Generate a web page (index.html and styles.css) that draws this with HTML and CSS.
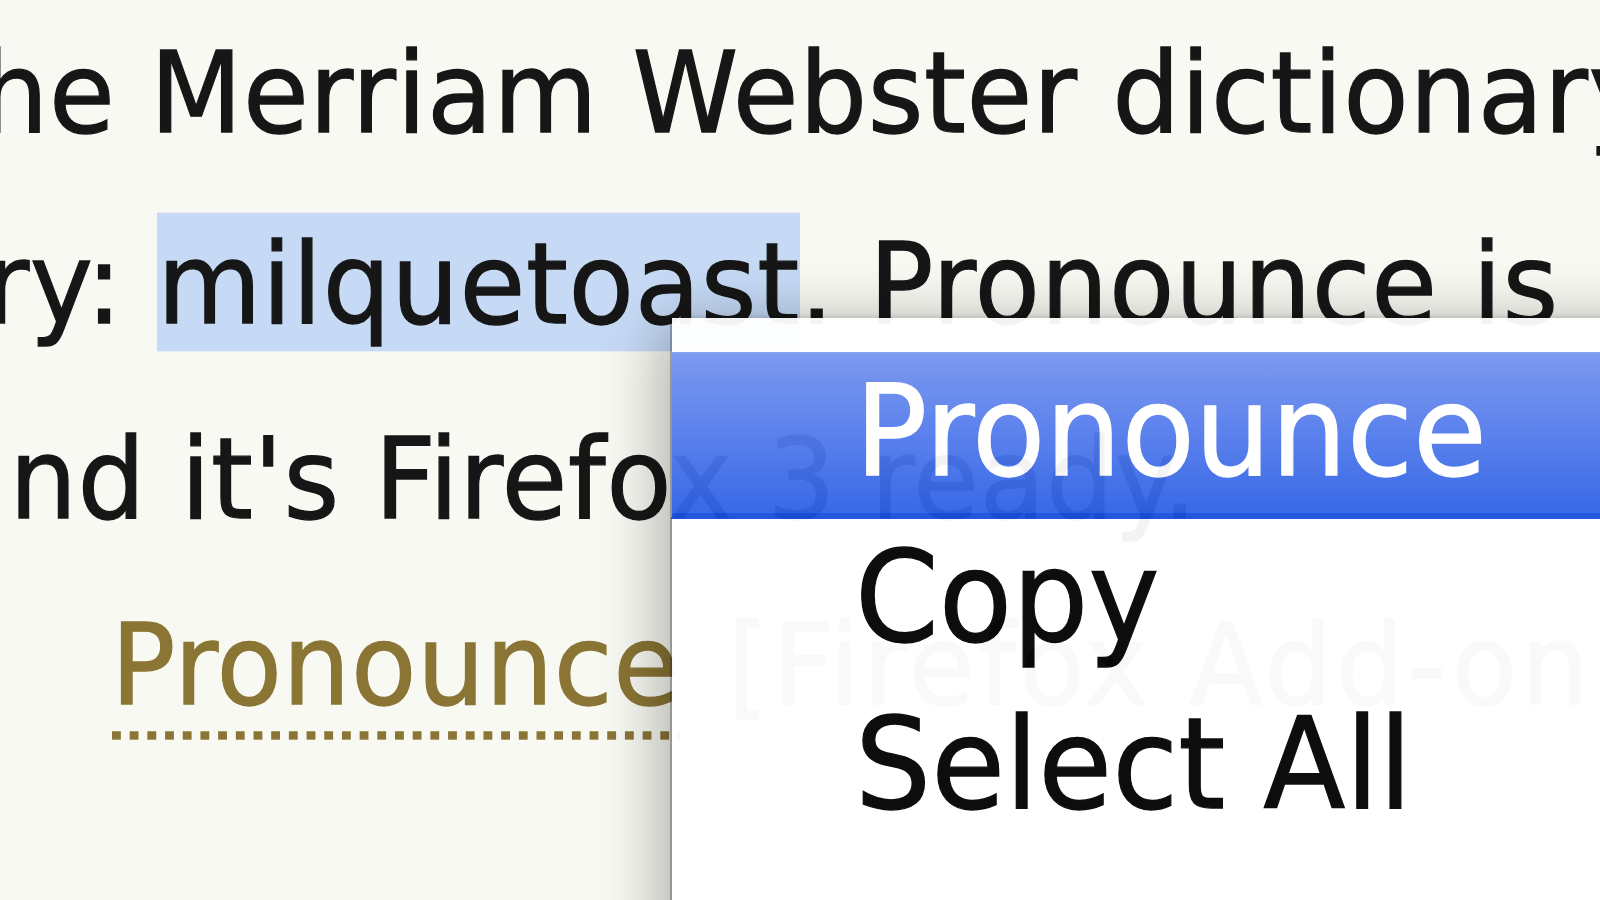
FILE: index.html
```html
<!DOCTYPE html>
<html lang="en">
<head>
<meta charset="utf-8">
<title>Pronounce</title>
<link rel="stylesheet" href="styles.css">
</head>
<body>
<div class="page">
  <div class="line l1">the Merriam Webster dictionary</div>
  <div class="line l2">ary: <span class="sel">milquetoast</span>. Pronounce is</div>
  <div class="line l3">and it's Firefox 3 ready.</div>
  <div class="line l4"><a class="link">Pronounce</a> <span class="meta">[Firefox Add-on]</span></div>
  <div class="menu">
    <div class="item active"><span class="label">Pronounce</span></div>
    <div class="item"><span class="label">Copy</span></div>
    <div class="item"><span class="label">Select All</span></div>
  </div>
</div>
</body>
</html>
```

FILE: styles.css
```css
html, body {
  margin: 0;
  padding: 0;
  width: 1600px;
  height: 900px;
  overflow: hidden;
  background: #f9f9f3;
}

.page {
  position: relative;
  width: 1600px;
  height: 900px;
  overflow: hidden;
  font-family: "DejaVu Sans", "Liberation Sans", sans-serif;
  font-size: 107px;
  line-height: 191px;
  letter-spacing: 0.6px;
  color: #161616;
  -webkit-text-stroke: 1.2px currentColor;
  filter: blur(0.7px);
}

.line {
  white-space: nowrap;
  transform: scaleY(1.05);
  transform-origin: 0 132.5px;
}

.l1 { margin-left: -62px; }
.l2 { margin-left: -81px; }
.l3 { margin-left: -57px; margin-top: 4px; }
.l4 { margin-left: 111px; margin-top: -5px; }

.sel {
  background: #c6daf6;
  padding: 6px 0 2px 0;
}

.link {
  color: #8a7534;
  padding-bottom: 9px;
  background-image: linear-gradient(to right, #8a7534 0 9px, transparent 9px 17.7px);
  background-size: 17.7px 7.6px;
  background-repeat: repeat-x;
  background-position: 1px 100%;
}

.meta {
  color: #8c8c8c;
  margin-left: 13px;
  letter-spacing: 3.6px;
}

.menu {
  position: absolute;
  left: 672px;
  top: 318px;
  width: 1000px;
  height: 700px;
  box-sizing: border-box;
  padding-top: 34px;
  background: #ffffff;
  opacity: 0.95;
  box-shadow: -2px 0 0 rgba(0, 0, 0, 0.24), -10px 6px 60px rgba(0, 0, 0, 0.34), 0 -2px 4px rgba(0, 0, 0, 0.12);
  font-size: 120px;
  line-height: 161px;
  letter-spacing: 0;
  color: #000;
}

.item {
  height: 167px;
  box-sizing: border-box;
  padding-left: 183px;
  white-space: nowrap;
}

.label {
  display: inline-block;
  transform: scaleY(1.05);
  transform-origin: 0 122px;
}

.item.active {
  color: #ffffff;
  background: linear-gradient(to bottom, #7594ef 0%, #5a80ec 40%, #2f62e6 100%);
  border-top: 2px solid #7f9df1;
  border-bottom: 6px solid #1a4fdc;
  line-height: 159px;
}

.item.active .label {
  transform-origin: 0 121px;
}
```
